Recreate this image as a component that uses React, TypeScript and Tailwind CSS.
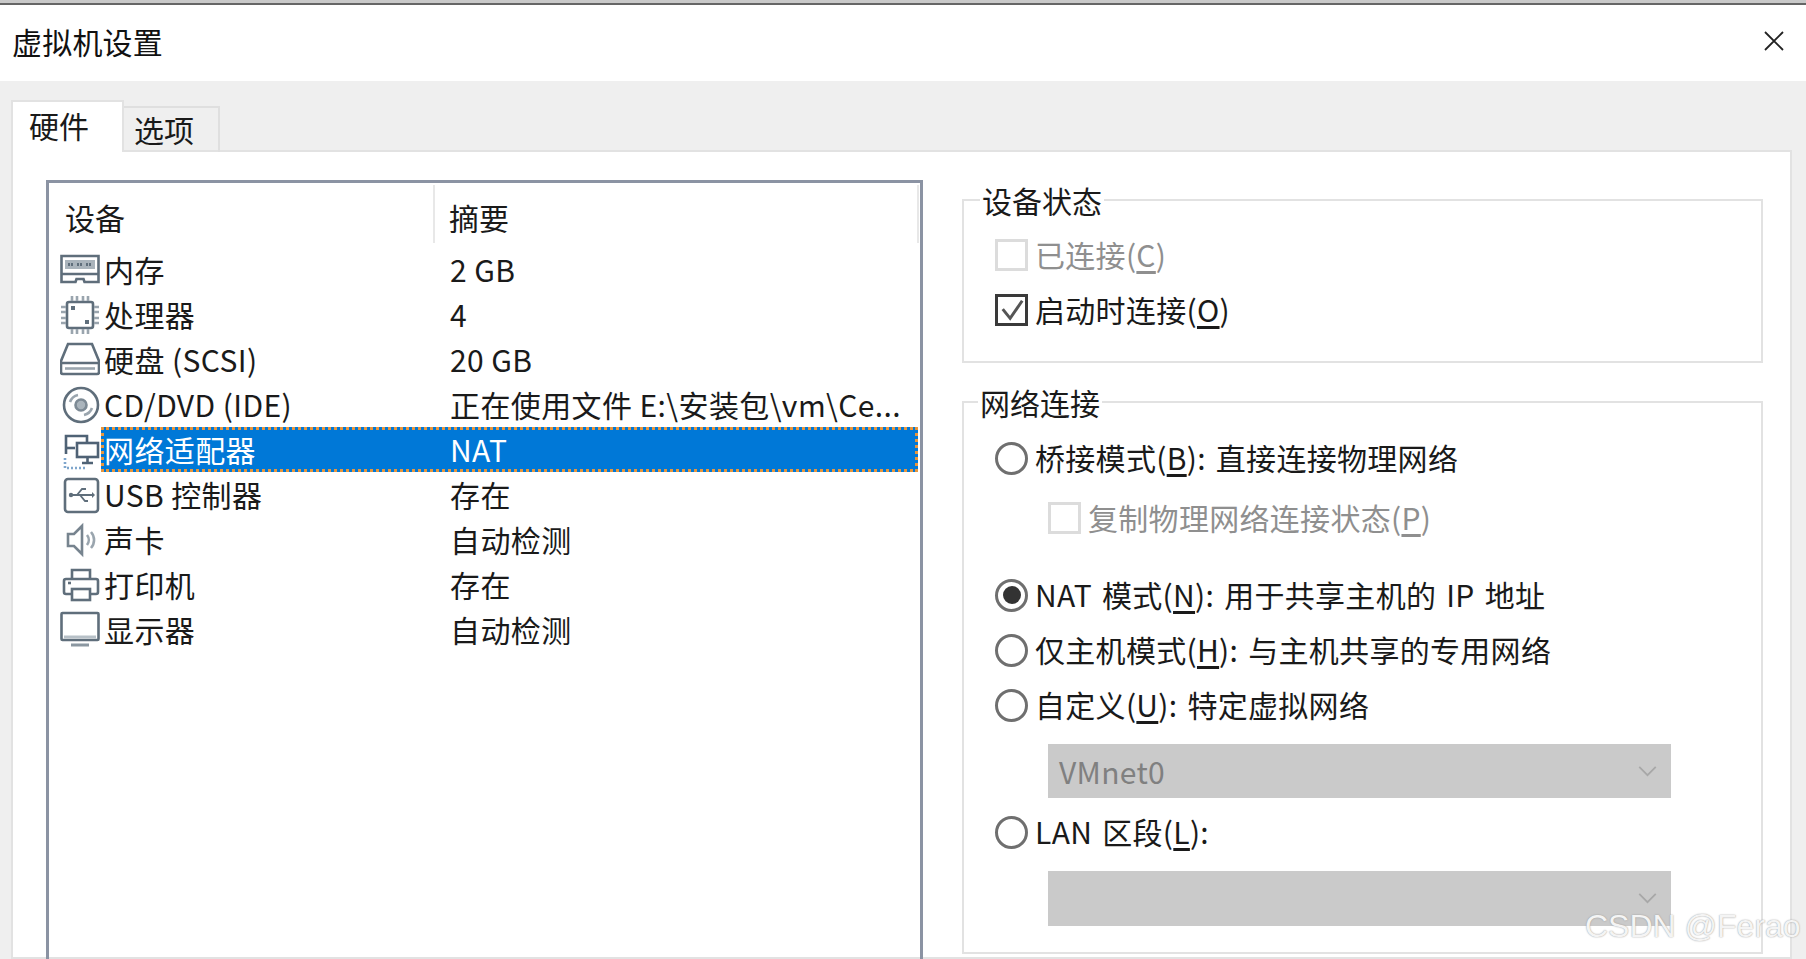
import React from 'react';

const font = "font-['Noto_Sans_CJK_SC','Noto_Sans',sans-serif]";

const IconBase: React.FC<{ children: React.ReactNode }> = ({ children }) => (
    <svg viewBox="0 0 40 40" className="w-[40px] h-[40px]" fill="none" stroke="#5f6e7b" strokeWidth="2.6">{children}</svg>
);

const MemoryIcon = () => (
    <IconBase>
        <path d="M1.500 6h37v26h-14l-1-3h-7l-1 3h-14z" />
        <rect x="5" y="10" width="30" height="9" fill="#aab4bc" stroke="none" />
        <path d="M8 14.500h6M17 14.500h6M26 14.500h6" stroke="#5f6e7b" strokeWidth="3" strokeDasharray="2 1" />
        <path d="M1.500 24h37" />
    </IconBase>
);
const CpuIcon = () => (
    <IconBase>
        <rect x="7" y="7" width="26" height="26" rx="2" />
        <path d="M12 1v5M17 1v5M23 1v5M28 1v5M12 34v5M17 34v5M23 34v5M28 34v5M1 12h5M1 17h5M1 23h5M1 28h5M34 12h5M34 17h5M34 23h5M34 28h5" stroke="#9aa5ae" />
        <rect x="11" y="11" width="4" height="4" fill="#5f6e7b" stroke="none" />
        <rect x="25" y="25" width="4" height="4" fill="#5f6e7b" stroke="none" />
    </IconBase>
);
const DiskIcon = () => (
    <IconBase>
        <path d="M8 4h24l7 17v11a2 2 0 0 1-2 2H3a2 2 0 0 1-2-2V21z" />
        <path d="M1 23h38" />
        <path d="M5 28.500h30" stroke="#9aa5ae" />
    </IconBase>
);
const CdIcon = () => (
    <IconBase>
        <circle cx="21" cy="20" r="17" />
        <circle cx="21" cy="20" r="5.500" fill="#aab4bc" stroke="#7d8a95" />
        <path d="M10 17a11 11 0 0 1 8-7M32 23a11 11 0 0 1-8 7" stroke="#9aa5ae" />
    </IconBase>
);
const NetworkIcon = () => (
    <IconBase>
        <path d="M6 24V6h21v6" stroke="#4f6275" />
        <path d="M6 18h9" stroke="#4f6275" />
        <rect x="17" y="13" width="21" height="14" fill="#fff" stroke="#4f6275" />
        <path d="M27.500 27v5M22 33h11" stroke="#4f6275" />
        <path d="M5 28v10h22" stroke="#7fa6cc" strokeDasharray="2 2" />
    </IconBase>
);
const UsbIcon = () => (
    <IconBase>
        <rect x="5" y="4" width="33" height="33" rx="3" />
        <path d="M11 20h21M17 20l5-6h4M20 20l5 6h3" strokeWidth="1.8" />
        <circle cx="11" cy="20" r="2.200" fill="#5f6e7b" stroke="none" />
        <path d="M32 17v6l3-3z" fill="#5f6e7b" stroke="none" />
    </IconBase>
);
const SpeakerIcon = () => (
    <IconBase>
        <path d="M8 14h6l8-8v28l-8-8H8z" stroke="#77848f" />
        <path d="M27 15a8 8 0 0 1 0 10M31 12a12 12 0 0 1 0 16" stroke="#9aa5ae" />
    </IconBase>
);
const PrinterIcon = () => (
    <IconBase>
        <path d="M12 14V5h18v9" />
        <path d="M12 29H6a2 2 0 0 1-2-2V16a2 2 0 0 1 2-2h30a2 2 0 0 1 2 2v11a2 2 0 0 1-2 2h-6" />
        <rect x="12" y="24" width="18" height="11" />
        <path d="M8 18h3" />
    </IconBase>
);
const MonitorIcon = () => (
    <IconBase>
        <rect x="1.500" y="3" width="37" height="27" rx="1" />
        <path d="M4 27h32" stroke="#b7c0c7" strokeWidth="3" />
        <path d="M11 35h18" strokeWidth="3" stroke="#8b97a1" />
    </IconBase>
);

const devices = [
    { name: '内存', summary: '2 GB', icon: <MemoryIcon /> },
    { name: '处理器', summary: '4', icon: <CpuIcon /> },
    { name: '硬盘 (SCSI)', summary: '20 GB', icon: <DiskIcon /> },
    { name: 'CD/DVD (IDE)', summary: '正在使用文件 E:\\安装包\\vm\\Ce...', icon: <CdIcon /> },
    { name: '网络适配器', summary: 'NAT', icon: <NetworkIcon />, selected: true },
    { name: 'USB 控制器', summary: '存在', icon: <UsbIcon /> },
    { name: '声卡', summary: '自动检测', icon: <SpeakerIcon /> },
    { name: '打印机', summary: '存在', icon: <PrinterIcon /> },
    { name: '显示器', summary: '自动检测', icon: <MonitorIcon /> },
];

const Check: React.FC<{ checked?: boolean; disabled?: boolean }> = ({ checked, disabled }) => (
    <span className={`w-[33px] h-[32px] shrink-0 border-[3px] flex items-center justify-center ${disabled ? 'border-[#dcdcdc] bg-white' : 'border-[#3a3a3a] bg-white'}`}>
        {checked && (
            <svg viewBox="0 0 28 28" className="w-[26px] h-[26px]" fill="none" stroke="#555555" strokeWidth="3.200">
                <path d="M4 13l8 10L25 4" />
            </svg>
        )}
    </span>
);

const Radio: React.FC<{ checked?: boolean }> = ({ checked }) => (
    <span className="w-[33px] h-[33px] shrink-0 rounded-full border-[3px] border-[#6f6f6f] bg-white flex items-center justify-center">
        {checked && <span className="w-[18px] h-[18px] rounded-full bg-[#333333]" />}
    </span>
);

const Option: React.FC<{ control: React.ReactNode; disabled?: boolean; children: React.ReactNode; className?: string }> = ({ control, disabled, children, className = '' }) => (
    <div className={`flex items-center gap-[7px] h-[40px] text-[30px] leading-[40px] tracking-[0.3px] [word-spacing:3px] whitespace-nowrap ${disabled ? 'text-[#8f8f8f]' : 'text-[#1a1a1a]'} ${className}`}>
        {control}
        <span className="-mt-[2px]">{children}</span>
    </div>
);

const Key: React.FC<{ k: string }> = ({ k }) => (
    <>(<span className="underline underline-offset-4">{k}</span>)</>
);

const Select: React.FC<{ value?: string; className?: string }> = ({ value, className = '' }) => (
    <div className={`ml-[53px] w-[623px] h-[54px] bg-[#cacaca] flex items-center justify-between pl-[11px] pr-[14px] text-[30px] tracking-[0.3px] text-[#808080] ${className}`}>
        <span>{value}</span>
        <svg viewBox="0 0 20 12" className="w-[19px] h-[11px]" fill="none" stroke="#a8a8a8" strokeWidth="2">
            <path d="M1 1l9 9 9-9" />
        </svg>
    </div>
);

const Group: React.FC<{ title: string; legendClass: string; className: string; children: React.ReactNode }> = ({ title, legendClass, className, children }) => (
    <fieldset className={`border-2 border-[#e2e2e2] pl-[31px] ${className}`}>
        <legend className={`px-[2px] text-[30px] leading-[36px] text-[#1a1a1a] ${legendClass}`}>{title}</legend>
        {children}
    </fieldset>
);

export default function App() {
    return (
        <div className={`${font} relative w-[1806px] h-[959px] overflow-hidden flex flex-col bg-white`}>
            <div className="h-[3px] bg-[#c9c9c9]" />
            <div className="h-[2px] bg-[#666666]" />
            <div className="h-[76px] flex items-center justify-between pl-[12px] pr-[22px]">
                <span className="text-[30px] leading-[40px] tracking-[0.2px] text-[#111111] -mt-[4px]">虚拟机设置</span>
                <svg viewBox="0 0 20 20" className="w-[20px] h-[20px] -mt-[5px]" fill="none" stroke="#222222" strokeWidth="1.800">
                    <path d="M1 1l18 18M19 1L1 19" />
                </svg>
            </div>

            <div className="flex-1 min-h-0 bg-[#efefef] pl-[11px] pr-[14px] pt-[19px] flex flex-col">
                <div className="flex items-end h-[52px] text-[30px] text-[#1a1a1a] relative z-10 -mb-[2px]">
                    <div className="w-[113px] h-[52px] bg-white border-2 border-b-0 border-[#e2e2e2] pl-[16px] leading-[46px]">硬件</div>
                    <div className="w-[96px] h-[46px] border-2 border-l-0 border-b-0 border-[#dfdfdf] pl-[10px] leading-[42px]">选项</div>
                </div>
                <div className="flex-1 min-h-0 bg-white border-2 border-[#e2e2e2] pl-[33px] pt-[28px] flex items-start">
                    <div className="w-[877px] h-[800px] shrink-0 border-[3px] border-[#8b93a3] pt-[2px]">
                        <div className="flex h-[58px] text-[30px] text-[#1a1a1a] leading-[60px] mb-[4px]">
                            <div className="w-[386px] border-r-2 border-[#e8e8e8] pl-[16px] pt-[2px]">设备</div>
                            <div className="w-[484px] border-r-2 border-[#e8e8e8] pl-[14px] pt-[2px]">摘要</div>
                        </div>
                        {devices.map(d => (
                            <div key={d.name} className="flex items-center h-[45px] text-[30px] tracking-[0.4px] text-[#1a1a1a]">
                                <span className="w-[52px] pl-[11px] shrink-0 flex">{d.icon}</span>
                                <div className={`w-[817px] h-[45px] flex items-center whitespace-nowrap ${d.selected ? 'bg-[#0078d7] text-white border-[3px] border-dotted border-[#e8963c]' : 'border-[3px] border-transparent'}`}>
                                    <span className="w-[346px] shrink-0">{d.name}</span>
                                    <span>{d.summary}</span>
                                </div>
                            </div>
                        ))}
                    </div>

                    <div className="ml-[39px] mt-[2px] w-[801px] shrink-0">
                        <Group title="设备状态" legendClass="-ml-[15px]" className="pt-[17px] pb-[31px]">
                            <Option control={<Check disabled />} disabled>已连接<Key k="C" /></Option>
                            <Option control={<Check checked />} className="mt-[15px]">启动时连接<Key k="O" /></Option>
                        </Group>
                        <Group title="网络连接" legendClass="-ml-[17px]" className="mt-[21px] pt-[18px] pb-[26px]">
                            <Option control={<Radio />}>桥接模式<Key k="B" />: 直接连接物理网络</Option>
                            <Option control={<Check disabled />} disabled className="ml-[53px] mt-[20px]">复制物理网络连接状态<Key k="P" /></Option>
                            <Option control={<Radio checked />} className="mt-[37px]">NAT 模式<Key k="N" />: 用于共享主机的 IP 地址</Option>
                            <Option control={<Radio />} className="mt-[15px]">仅主机模式<Key k="H" />: 与主机共享的专用网络</Option>
                            <Option control={<Radio />} className="mt-[15px]">自定义<Key k="U" />: 特定虚拟网络</Option>
                            <Select value="VMnet0" className="mt-[19px]" />
                            <Option control={<Radio />} className="mt-[14px]">LAN 区段<Key k="L" />:</Option>
                            <Select className="mt-[19px] !h-[55px]" />
                        </Group>
                    </div>
                </div>
            </div>

            <span className="absolute left-[1585px] top-[904px] text-[32px] leading-[44px] whitespace-nowrap text-[#f4f4f4] font-['Liberation_Sans',sans-serif] [text-shadow:0_0_1.5px_#8a8a8a]">CSDN @Ferao</span>
        </div>
    );
}
